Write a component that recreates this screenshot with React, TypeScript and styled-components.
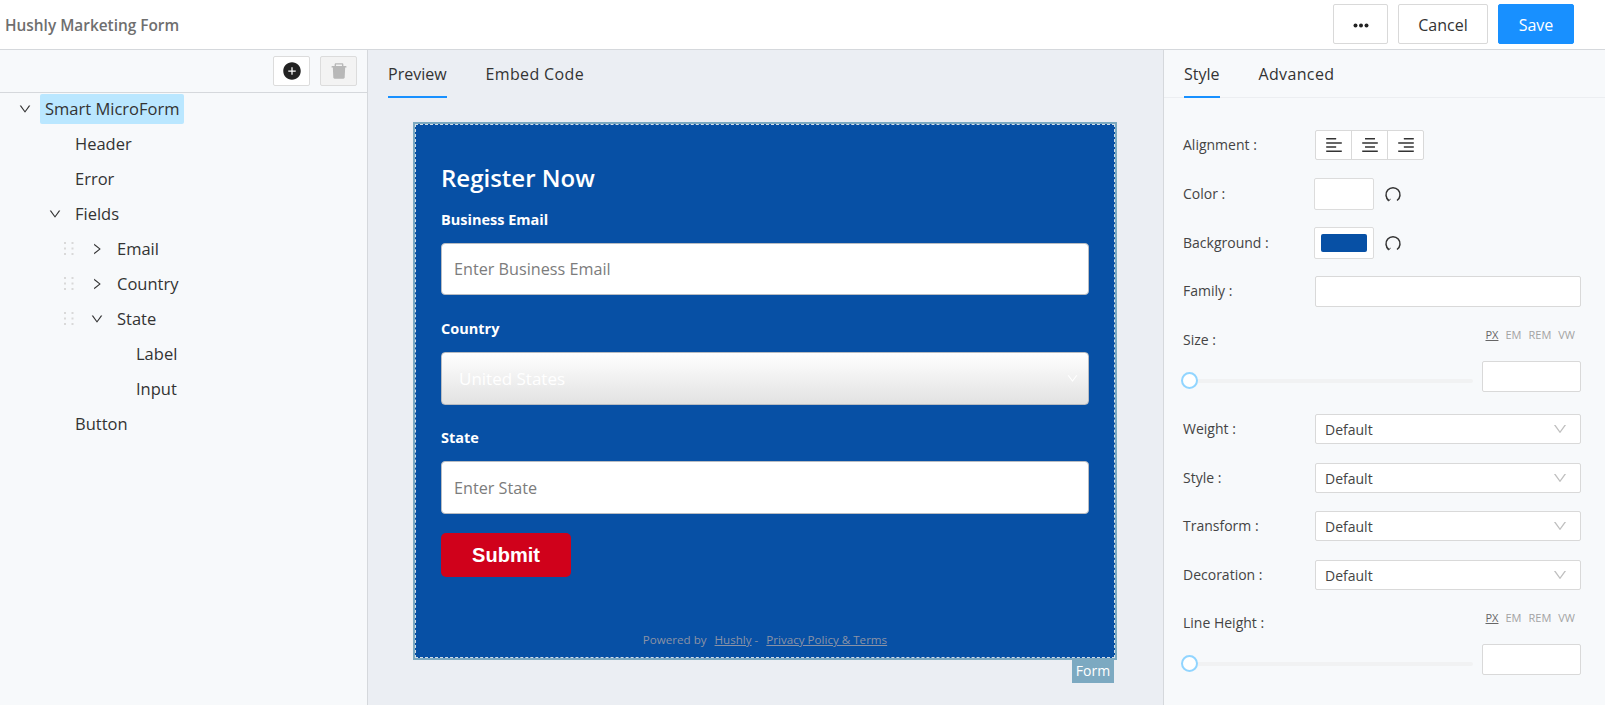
import styled, { createGlobalStyle } from 'styled-components'
import {
  AiFillDelete,
  AiFillPlusCircle,
  AiOutlineAlignCenter,
  AiOutlineAlignLeft,
  AiOutlineAlignRight,
  AiOutlineDown,
  AiOutlineRight,
} from 'react-icons/ai'

const GlobalStyle = createGlobalStyle`
  html, body {
    margin: 0;
    padding: 0;
    height: 705px;
    overflow: hidden;
  }
  * {
    box-sizing: border-box;
  }
  body {
    font-family: "Open Sans", "Noto Sans", sans-serif;
    color: #333;
  }
`

const Page = styled.div`
  width: 1605px;
  height: 705px;
  display: flex;
  flex-direction: column;
  background: #f7f9fb;
`

const TopBar = styled.header`
  height: 50px;
  flex: none;
  display: flex;
  align-items: center;
  justify-content: space-between;
  padding: 0 31px 1px 5px;
  background: #fff;
  border-bottom: 1px solid #d5d8dc;
`

const AppTitle = styled.div`
  padding-top: 3px;
  font-size: 15.4px;
  font-weight: 600;
  color: #6f6f6f;
`

const TopActions = styled.div`
  display: flex;
  gap: 10px;
`

const TopButton = styled.div<{ $primary?: boolean; $width: number }>`
  width: ${(props) => props.$width}px;
  height: 40px;
  padding-top: 2px;
  display: flex;
  align-items: center;
  justify-content: center;
  font-size: 16px;
  border-radius: 2px;
  border: 1px solid ${(props) => (props.$primary ? '#1890ff' : '#d9d9d9')};
  background: ${(props) => (props.$primary ? '#1890ff' : '#fff')};
  color: ${(props) => (props.$primary ? '#fff' : '#333')};
`

const Columns = styled.div`
  flex: 1;
  display: flex;
  min-height: 0;
`

const LeftPanel = styled.aside`
  width: 368px;
  flex: none;
  border-right: 1px solid #d5d8dc;
  background: #f7f9fb;
`

const TreeToolbar = styled.div`
  height: 43px;
  display: flex;
  justify-content: flex-end;
  align-items: flex-start;
  gap: 10px;
  padding: 6px 10px 0 0;
  border-bottom: 1px solid #d5d8dc;
`

const ToolButton = styled.div<{ $disabled?: boolean }>`
  width: 37px;
  height: 30px;
  display: flex;
  align-items: center;
  justify-content: center;
  border-radius: 2px;
  border: 1px solid #dcdcdc;
  background: ${(props) => (props.$disabled ? '#f3f3f3' : '#fff')};
  color: ${(props) => (props.$disabled ? '#b8b8b8' : '#222')};
  font-size: 20px;
`

const Tree = styled.div`
  padding-top: 1px;
`

const TreeRow = styled.div<{ $indent: number }>`
  height: 30px;
  margin-bottom: 5px;
  display: flex;
  align-items: center;
  padding-left: ${(props) => props.$indent}px;
`

const DragHandle = styled.div`
  width: 20px;
  flex: none;
  display: flex;
`

const Switcher = styled.span`
  width: 29px;
  flex: none;
  display: flex;
  align-items: center;
  justify-content: center;
  padding-right: 1px;
  font-size: 14px;
  color: #333;
`

const TreeLabel = styled.span<{ $selected?: boolean }>`
  height: 30px;
  line-height: 30px;
  padding: 0 5px;
  font-size: 16.5px;
  border-radius: 2px;
  background: ${(props) => (props.$selected ? '#bae7ff' : 'transparent')};
`

const Center = styled.main`
  flex: 1;
  min-width: 0;
  background: #ebeef3;
`

const TabBar = styled.div<{ $bordered?: boolean }>`
  height: 48px;
  display: flex;
  gap: 39px;
  padding-left: 20px;
  border-bottom: ${(props) => (props.$bordered ? '1px solid #eceef1' : 'none')};
`

const Tab = styled.div<{ $active?: boolean }>`
  height: 48px;
  line-height: 49px;
  font-size: 16px;
  letter-spacing: ${(props) => (props.$active ? 0 : '0.35px')};
  color: #333;
  border-bottom: 2px solid ${(props) => (props.$active ? '#1890ff' : 'transparent')};
`

const FormFrame = styled.div`
  position: relative;
  width: 704px;
  height: 538px;
  margin: 24px 0 0 45px;
  border: 2px solid #7ca9c1;
`

const FormTag = styled.div`
  position: absolute;
  right: 1px;
  bottom: -25px;
  width: 42px;
  height: 25px;
  line-height: 25px;
  text-align: center;
  font-size: 14px;
  color: #fff;
  background: #7ca9c1;
`

const FormBody = styled.div`
  height: 100%;
  display: flex;
  flex-direction: column;
  padding: 35px 25px 0 25px;
  background: #0750a5;
  border: 1px dashed #d5dfe8;
  color: #fff;
`

const FormTitle = styled.h2`
  margin: 0 0 12px;
  height: 36px;
  line-height: 36px;
  font-size: 24px;
  font-weight: 600;
`

const FieldLabel = styled.div`
  height: 25px;
  line-height: 24px;
  font-size: 14.5px;
  font-weight: 700;
`

const FieldBox = styled.div<{ $gradient?: boolean; $height: number; $gap: number }>`
  height: ${(props) => props.$height}px;
  margin: 10px 0 ${(props) => props.$gap}px;
  padding: 0 12px;
  display: flex;
  align-items: center;
  justify-content: space-between;
  font-size: 16.2px;
  color: #7c7c7c;
  border-radius: 4px;
  border: 1px solid #b8bcc2;
  background: ${(props) => (props.$gradient ? 'linear-gradient(#fff, #e2e2e2)' : '#fff')};
`

const SelectValue = styled.span`
  padding-left: 5px;
  font-size: 17px;
  color: #fff;
`

const SelectArrow = styled(AiOutlineDown)`
  margin-right: -3px;
`

const SubmitButton = styled.div`
  width: 130px;
  height: 44px;
  display: flex;
  align-items: center;
  justify-content: center;
  font-family: "Liberation Sans", Arial, sans-serif;
  font-size: 20px;
  font-weight: 700;
  color: #fff;
  background: #d0011b;
  border-radius: 5px;
`

const PoweredBy = styled.div`
  margin-top: auto;
  height: 25px;
  text-align: center;
  font-size: 11.6px;
  color: #8b93a6;
`

const FooterLink = styled.span`
  text-decoration: underline;
  margin-left: 5px;
`

const RightPanel = styled.aside`
  width: 442px;
  flex: none;
  border-left: 1px solid #d5d8dc;
  background: #f7f9fb;
`

const PanelBody = styled.div`
  padding: 32px 24px 0 19px;
`

const SettingRow = styled.div<{ $gap?: number }>`
  display: flex;
  align-items: center;
  margin-bottom: ${(props) => props.$gap ?? 0}px;
`

const SettingLabel = styled.div`
  width: 132px;
  flex: none;
  margin-top: -2px;
  font-size: 14px;
  color: #444;
`

const AlignGroup = styled.div`
  display: flex;
  width: 109px;
  height: 30px;
  border: 1px solid #d9d9d9;
  border-radius: 2px;
  background: #fff;
`

const AlignButton = styled.div`
  flex: 1;
  display: flex;
  align-items: center;
  justify-content: center;
  font-size: 20px;
  color: #333;
  & + & {
    border-left: 1px solid #d9d9d9;
  }
`

const Swatch = styled.div<{ $fill: string }>`
  width: 60px;
  height: 32px;
  margin-left: -1px;
  padding: 6px;
  border: 1px solid #dcdcdc;
  border-radius: 2px;
  background: #fff;
  &::after {
    content: '';
    display: block;
    height: 100%;
    border-radius: 2px;
    background: ${(props) => props.$fill};
  }
`

const ResetIcon = styled.svg`
  margin-left: 10px;
  width: 18px;
  height: 18px;
`

const TextBox = styled.div<{ $width?: number }>`
  width: ${(props) => (props.$width ? `${props.$width}px` : 'auto')};
  flex: ${(props) => (props.$width ? 'none' : 1)};
  height: 31px;
  border: 1px solid #d9d9d9;
  border-radius: 2px;
  background: #fff;
`

const SelectBox = styled.div`
  flex: 1;
  height: 30px;
  display: flex;
  align-items: center;
  justify-content: space-between;
  padding: 0 12px 0 9px;
  font-size: 14px;
  color: #444;
  border: 1px solid #d9d9d9;
  border-radius: 2px;
  background: #fff;
  svg {
    color: #bfbfbf;
    font-size: 16px;
  }
`

const UnitHeader = styled.div`
  display: flex;
  align-items: flex-start;
  justify-content: space-between;
  height: 34px;
`

const UnitLabel = styled(SettingLabel)`
  padding-top: 5px;
`

const Units = styled.div`
  display: flex;
  gap: 7px;
  padding-right: 6px;
  font-size: 11px;
  color: #a3a3a3;
`

const Unit = styled.span<{ $active?: boolean }>`
  color: ${(props) => (props.$active ? '#666' : '#a3a3a3')};
  text-decoration: ${(props) => (props.$active ? 'underline' : 'none')};
`

const SliderRow = styled.div<{ $gap?: number }>`
  display: flex;
  align-items: center;
  gap: 9px;
  margin-bottom: ${(props) => props.$gap ?? 0}px;
`

const SliderTrack = styled.div`
  position: relative;
  flex: 1;
  height: 4px;
  margin-top: 8px;
  border-radius: 2px;
  background: #f1f2f3;
`

const SliderHandle = styled.span`
  position: absolute;
  left: -2px;
  top: -7px;
  width: 17px;
  height: 17px;
  border-radius: 50%;
  border: 2px solid #91d5ff;
  background: #fff;
`

const Dots = () => (
  <svg width="11" height="14" viewBox="0 0 11 14" fill="#d9d9d9">
    {[0, 5.5, 11].map((y) =>
      [1, 8.5].map((x) => <rect key={`${x}-${y}`} x={x} y={y} width="2" height="2" />),
    )}
  </svg>
)

const MoreDots = () => (
  <svg width="16" height="5" viewBox="0 0 16 5" fill="#222">
    <circle cx="2.5" cy="2.5" r="2" />
    <circle cx="8" cy="2.5" r="2" />
    <circle cx="13.5" cy="2.5" r="2" />
  </svg>
)

const Reset = () => (
  <ResetIcon viewBox="0 0 18 18" fill="none" stroke="#333" strokeWidth="1.5">
    <path d="M5 15.5 A7 7 0 1 1 13 15.5" />
    <path d="M2.6 13.4 L4.4 16 L6.6 14.2" strokeWidth="1" />
  </ResetIcon>
)

type TreeNode = {
  label: string
  indent: number
  open?: boolean
  closed?: boolean
  drag?: boolean
  selected?: boolean
}

const treeNodes: TreeNode[] = [
  { label: 'Smart MicroForm', indent: 11, open: true, selected: true },
  { label: 'Header', indent: 41 },
  { label: 'Error', indent: 41 },
  { label: 'Fields', indent: 41, open: true },
  { label: 'Email', indent: 63, closed: true, drag: true },
  { label: 'Country', indent: 63, closed: true, drag: true },
  { label: 'State', indent: 63, open: true, drag: true },
  { label: 'Label', indent: 131 },
  { label: 'Input', indent: 131 },
  { label: 'Button', indent: 41 },
]

const UnitSwitch = () => (
  <Units>
    <Unit $active>PX</Unit>
    <Unit>EM</Unit>
    <Unit>REM</Unit>
    <Unit>VW</Unit>
  </Units>
)

const App = () => {
  return (
    <Page>
      <GlobalStyle />
      <TopBar>
        <AppTitle>Hushly Marketing Form</AppTitle>
        <TopActions>
          <TopButton $width={55}>
            <MoreDots />
          </TopButton>
          <TopButton $width={90}>Cancel</TopButton>
          <TopButton $width={76} $primary>
            Save
          </TopButton>
        </TopActions>
      </TopBar>
      <Columns>
        <LeftPanel>
          <TreeToolbar>
            <ToolButton>
              <AiFillPlusCircle />
            </ToolButton>
            <ToolButton $disabled>
              <AiFillDelete />
            </ToolButton>
          </TreeToolbar>
          <Tree>
            {treeNodes.map((node) => (
              <TreeRow key={node.label} $indent={node.indent}>
                {node.drag ? (
                  <DragHandle>
                    <Dots />
                  </DragHandle>
                ) : null}
                {node.indent !== 131 ? (
                  <Switcher>
                    {node.open ? <AiOutlineDown /> : null}
                    {node.closed ? <AiOutlineRight /> : null}
                  </Switcher>
                ) : null}
                <TreeLabel $selected={node.selected}>{node.label}</TreeLabel>
              </TreeRow>
            ))}
          </Tree>
        </LeftPanel>
        <Center>
          <TabBar>
            <Tab $active>Preview</Tab>
            <Tab>Embed Code</Tab>
          </TabBar>
          <FormFrame>
            <FormBody>
              <FormTitle>Register Now</FormTitle>
              <FieldLabel>Business Email</FieldLabel>
              <FieldBox $height={52} $gap={22}>
                Enter Business Email
              </FieldBox>
              <FieldLabel>Country</FieldLabel>
              <FieldBox $height={53} $gap={21} $gradient>
                <SelectValue>United States</SelectValue>
                <SelectArrow color="#fff" size={13} />
              </FieldBox>
              <FieldLabel>State</FieldLabel>
              <FieldBox $height={53} $gap={19}>
                Enter State
              </FieldBox>
              <SubmitButton>Submit</SubmitButton>
              <PoweredBy>
                Powered by <FooterLink>Hushly</FooterLink> - <FooterLink>Privacy Policy &amp; Terms</FooterLink>
              </PoweredBy>
            </FormBody>
            <FormTag>Form</FormTag>
          </FormFrame>
        </Center>
        <RightPanel>
          <TabBar $bordered>
            <Tab $active>Style</Tab>
            <Tab>Advanced</Tab>
          </TabBar>
          <PanelBody>
            <SettingRow $gap={18}>
              <SettingLabel>Alignment :</SettingLabel>
              <AlignGroup>
                <AlignButton>
                  <AiOutlineAlignLeft />
                </AlignButton>
                <AlignButton>
                  <AiOutlineAlignCenter />
                </AlignButton>
                <AlignButton>
                  <AiOutlineAlignRight />
                </AlignButton>
              </AlignGroup>
            </SettingRow>
            <SettingRow $gap={17}>
              <SettingLabel>Color :</SettingLabel>
              <Swatch $fill="#fff" />
              <Reset />
            </SettingRow>
            <SettingRow $gap={17}>
              <SettingLabel>Background :</SettingLabel>
              <Swatch $fill="#0750a5" />
              <Reset />
            </SettingRow>
            <SettingRow $gap={20}>
              <SettingLabel>Family :</SettingLabel>
              <TextBox />
            </SettingRow>
            <UnitHeader>
              <UnitLabel>Size :</UnitLabel>
              <UnitSwitch />
            </UnitHeader>
            <SliderRow $gap={22}>
              <SliderTrack>
                <SliderHandle />
              </SliderTrack>
              <TextBox $width={99} />
            </SliderRow>
            <SettingRow $gap={19}>
              <SettingLabel>Weight :</SettingLabel>
              <SelectBox>
                Default
                <AiOutlineDown />
              </SelectBox>
            </SettingRow>
            <SettingRow $gap={18}>
              <SettingLabel>Style :</SettingLabel>
              <SelectBox>
                Default
                <AiOutlineDown />
              </SelectBox>
            </SettingRow>
            <SettingRow $gap={19}>
              <SettingLabel>Transform :</SettingLabel>
              <SelectBox>
                Default
                <AiOutlineDown />
              </SelectBox>
            </SettingRow>
            <SettingRow $gap={20}>
              <SettingLabel>Decoration :</SettingLabel>
              <SelectBox>
                Default
                <AiOutlineDown />
              </SelectBox>
            </SettingRow>
            <UnitHeader>
              <UnitLabel>Line Height :</UnitLabel>
              <UnitSwitch />
            </UnitHeader>
            <SliderRow>
              <SliderTrack>
                <SliderHandle />
              </SliderTrack>
              <TextBox $width={99} />
            </SliderRow>
          </PanelBody>
        </RightPanel>
      </Columns>
    </Page>
  )
}

export default App
